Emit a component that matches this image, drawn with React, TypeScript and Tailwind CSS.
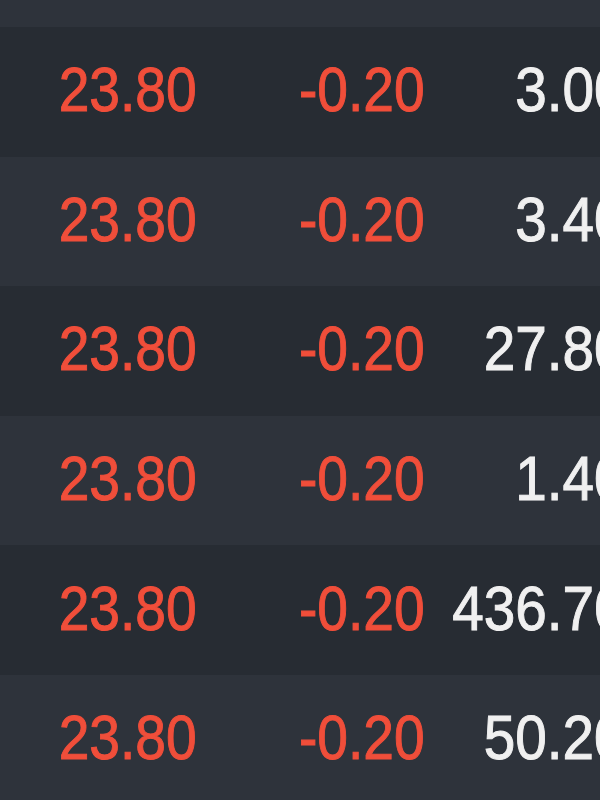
const rows = [
  { price: '23.80', change: '-0.20', vol: '3.00', amt: '71.40' },
  { price: '23.80', change: '-0.20', vol: '3.40', amt: '80.92' },
  { price: '23.80', change: '-0.20', vol: '27.80', amt: '661.64' },
  { price: '23.80', change: '-0.20', vol: '1.40', amt: '33.32' },
  { price: '23.80', change: '-0.20', vol: '436.70', amt: '10393.46' },
  { price: '23.80', change: '-0.20', vol: '50.20', amt: '1194.76' },
];

function Cell({ text, width, tone }: { text: string; width: string; tone: 'down' | 'plain' }) {
  return (
    <div className={`${width} shrink-0 flex justify-end`}>
      <span
        className={`block origin-right text-[63px] leading-none whitespace-nowrap [-webkit-text-stroke:1px_currentColor] ${
          tone === 'down' ? 'scale-x-[0.875] text-[#f04e3a]' : 'scale-x-[0.9] text-[#f0f0f0]'
        }`}
      >
        {text}
      </span>
    </div>
  );
}

export default function App() {
  return (
    <div className="w-[600px] h-[800px] overflow-hidden bg-[#272c33] font-['Liberation_Sans',Arial,sans-serif]">
      <div className="h-[27px] bg-[#2e333b]" />
      {rows.map((r, i) => (
        <div
          key={i}
          className={`h-[129.6px] flex items-center pb-1 ${i % 2 === 0 ? 'bg-[#272c33]' : 'bg-[#2e333b]'}`}
        >
          <Cell text={r.price} width="w-[197px]" tone="down" />
          <Cell text={r.change} width="w-[228px]" tone="down" />
          <Cell text={r.vol} width="w-[201px]" tone="plain" />
          <Cell text={r.amt} width="w-[240px]" tone="plain" />
        </div>
      ))}
    </div>
  );
}
